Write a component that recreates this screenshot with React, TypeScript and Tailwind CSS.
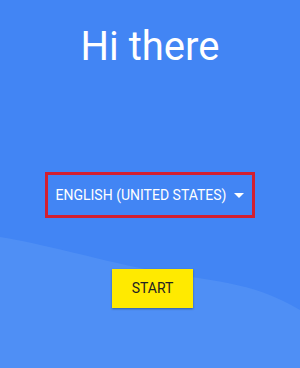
import React from "react";

export default function App() {
  return (
    <div
      className="relative w-[300px] h-[368px] overflow-hidden bg-[#4285f4]"
      style={{ fontFamily: "Roboto, 'Noto Sans', sans-serif" }}
    >
      <svg
        className="absolute left-0 top-0"
        width="300"
        height="368"
        viewBox="0 0 300 368"
      >
        <path
          d="M0 237 C 40 243 90 258 150 270 C 210 282 250 280 300 310 L300 368 L0 368 Z"
          fill="#4f8ff5"
        />
      </svg>
      <div className="relative flex flex-col items-center">
        <h1 className="mt-[23px] text-[40px] leading-[48px] text-white font-normal">
          Hi there
        </h1>
        <div className="mt-[101px] w-[210px] h-[46px] border-[3px] border-[#d3202f] flex items-center justify-center gap-[8px]">
          <span className="text-[14px] text-white font-normal">
            ENGLISH (UNITED STATES)
          </span>
          <svg width="10" height="5" viewBox="0 0 10 5">
            <path d="M0 0 L10 0 L5 5 Z" fill="white" />
          </svg>
        </div>
        <button className="mt-[51px] ml-[5px] w-[81px] h-[39px] bg-[#ffea00] text-[#222] text-[14px] font-normal shadow-[0_1px_2px_rgba(0,0,0,0.35)]">
          START
        </button>
      </div>
    </div>
  );
}
